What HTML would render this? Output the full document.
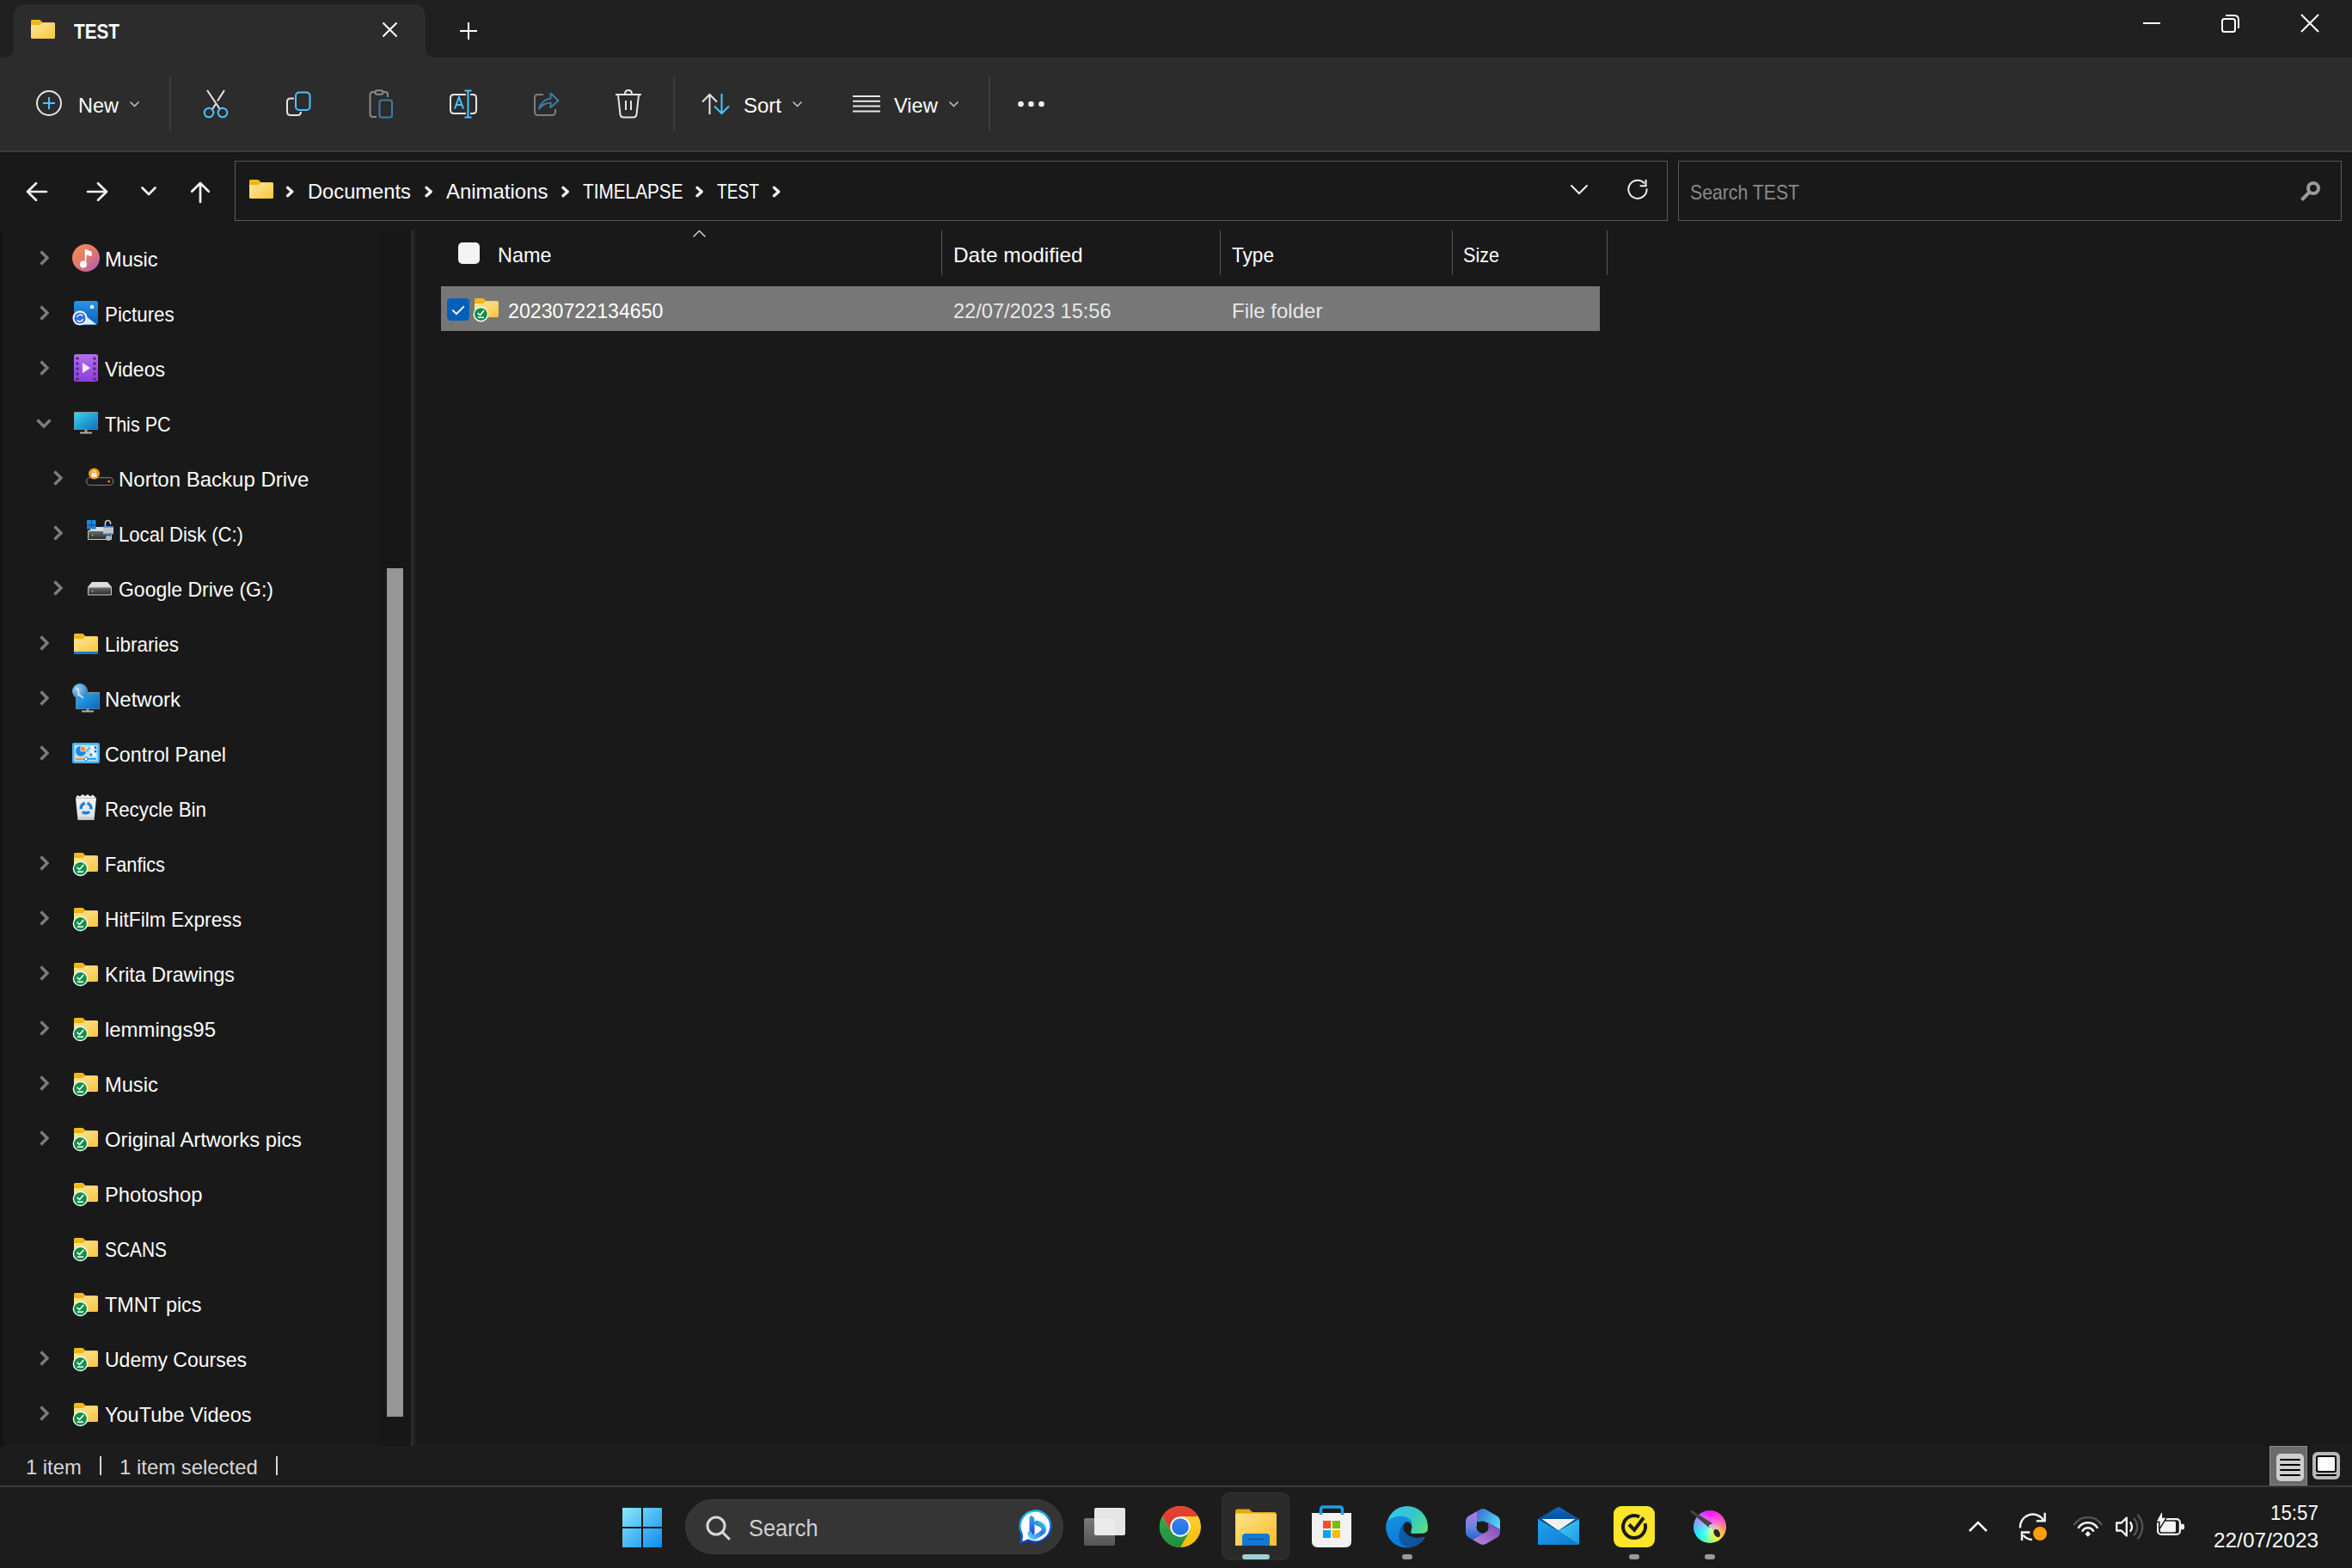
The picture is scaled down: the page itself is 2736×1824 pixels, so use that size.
<!DOCTYPE html>
<html><head><meta charset="utf-8"><style>
html,body{margin:0;padding:0;}
body{width:2736px;height:1824px;position:relative;overflow:hidden;background:#191919;font-family:"Liberation Sans",sans-serif;}
body>div,body>svg{position:absolute;}
.t{white-space:nowrap;transform-origin:0 0;}
</style></head><body>
<div style="left:0px;top:0px;width:2736px;height:66px;background:#202020;"></div>
<div style="left:0px;top:66px;width:2736px;height:109px;background:#2c2c2c;"></div>
<div style="left:503px;top:66px;width:2233px;height:1px;background:#1f1f1f;"></div>
<div style="left:0px;top:66px;width:8px;height:1px;background:#1f1f1f;"></div>
<div style="left:0px;top:175px;width:2736px;height:2px;background:#3a3a3a;"></div>
<div style="left:0px;top:177px;width:2736px;height:1505px;background:#191919;"></div>
<div style="left:0px;top:268px;width:4px;height:1414px;background:#131313;"></div>
<div style="left:442px;top:268px;width:36px;height:1414px;background:#171717;"></div>
<div style="left:478px;top:268px;width:3px;height:1414px;background:#2b2b2b;"></div>
<div style="left:481px;top:268px;width:3px;height:1414px;background:#202020;"></div>
<div style="left:0px;top:1682px;width:2736px;height:46px;background:#1c1c1c;"></div>
<div style="left:0px;top:1728px;width:2736px;height:2px;background:#3b3b3b;"></div>
<div style="left:0px;top:1730px;width:2736px;height:94px;background:#1c1c1c;"></div>
<div style="left:16px;top:5px;width:479px;height:62px;background:#2c2c2c;border-radius:13px 13px 0 0;"></div>
<div style="left:8px;top:58px;width:8px;height:8px;background:radial-gradient(circle at 0 0, #202020 7.5px, #2c2c2c 8px);"></div>
<div style="left:495px;top:58px;width:8px;height:8px;background:radial-gradient(circle at 100% 0, #202020 7.5px, #2c2c2c 8px);"></div>
<svg style="left:36px;top:23px" width="28" height="22" viewBox="0 0 28 22"><defs><linearGradient id="tabfb" x1="0" y1="0" x2="1" y2="1"><stop offset="0" stop-color="#fde7a0"/><stop offset="1" stop-color="#fbc53c"/></linearGradient><linearGradient id="tabft" x1="0" y1="0" x2="0" y2="1"><stop offset="0" stop-color="#f9bd1c"/><stop offset="1" stop-color="#e9a90e"/></linearGradient></defs><path d="M1.5 0 H9.5 Q10.5 0 11.2 0.8 L13.5 3.3 H26.5 Q28 3.3 28 4.8 V9 H0 V1.5 Q0 0 1.5 0Z" fill="url(#tabft)"/><path d="M0 7.3 Q0 6 1.3 6 H10.5 L13.2 3.3 H26.5 Q28 3.3 28 4.8 V20.5 Q28 22 26.5 22 H1.5 Q0 22 0 20.5Z" fill="url(#tabfb)"/></svg>
<div class="t" style="left:86.00px;top:24.68px;font-size:24px;line-height:24px;color:#ffffff;font-weight:700;transform:scaleX(0.8646);">TEST</div>
<svg style="left:0;top:0" width="2736" height="1824" viewBox="0 0 2736 1824"><g stroke="#fff" stroke-width="2" fill="none"><path d="M445.5 26.5 L461.5 42.5 M461.5 26.5 L445.5 42.5"/><path d="M535 36 H555 M545 26 V46"/><path d="M2493 27 H2513"/><rect x="2585" y="22" width="15" height="15" rx="2.5"/><path d="M2589 18 H2599 Q2604 18 2604 23 V33"/><path d="M2677 17 L2697 37 M2697 17 L2677 37"/></g></svg>
<svg style="left:0;top:0" width="2736" height="1824" viewBox="0 0 2736 1824"><g fill="none" stroke-width="2"><circle cx="57" cy="120" r="14" stroke="#e6e6e6"/><path d="M50 120 H64 M57 113 V127" stroke="#4cc2ff"/><path d="M151.5 118.5 L156.5 123.5 L161.5 118.5" stroke="#c8c8c8" stroke-width="1.5"/></g></svg>
<div class="t" style="left:91.00px;top:110.68px;font-size:24px;line-height:24px;color:#ffffff;transform:scaleX(0.9771);">New</div>
<div style="left:197px;top:89px;width:2px;height:63px;background:#3c3c3c;"></div>
<div style="left:783px;top:89px;width:2px;height:63px;background:#3c3c3c;"></div>
<div style="left:1150px;top:89px;width:2px;height:63px;background:#3c3c3c;"></div>
<svg style="left:0;top:0" width="2736" height="1824" viewBox="0 0 2736 1824"><g fill="none" stroke-width="2"><path d="M241 105 L255.5 126.5" stroke="#e6e6e6"/><path d="M261 105 L253 117.5 M251 121 L247 127" stroke="#e6e6e6"/><circle cx="243" cy="131" r="5.3" stroke="#4cc2ff"/><circle cx="259" cy="131" r="5.3" stroke="#4cc2ff"/></g></svg>
<svg style="left:0;top:0" width="2736" height="1824" viewBox="0 0 2736 1824"><g fill="none" stroke-width="2"><path d="M342 114.5 H338 Q334 114.5 334 118.5 V130 Q334 134 338 134 H346 Q350 134 350 130" stroke="#e6e6e6"/><rect x="344" y="107.5" width="16.5" height="20.5" rx="4" stroke="#4cc2ff"/></g></svg>
<svg style="left:0;top:0" width="2736" height="1824" viewBox="0 0 2736 1824"><g fill="none" stroke-width="2"><path d="M438 136 H434 Q430.5 136 430.5 132.5 V110.5 Q430.5 107 434 107 H436 M446 107 H448 Q451 107 451 110 V113" stroke="#8a8a8a"/><rect x="436.5" y="105.3" width="9" height="4.5" rx="2.2" stroke="#8a8a8a"/><rect x="441.5" y="116.5" width="14.5" height="20" rx="2.5" stroke="#3b7fa6"/></g></svg>
<svg style="left:0;top:0" width="2736" height="1824" viewBox="0 0 2736 1824"><g fill="none" stroke-width="2"><path d="M542 110 H528 Q524 110 524 114 V128 Q524 132 528 132 H542 M547 110 H550 Q554 110 554 114 V128 Q554 132 550 132 H547" stroke="#e6e6e6"/><path d="M529 126.5 L534 113 L539 126.5 M531 122 H537" stroke="#4cc2ff"/><path d="M544.5 105.5 V136.5 M540.5 105.5 H548.5 M540.5 136.5 H548.5" stroke="#4cc2ff"/></g></svg>
<svg style="left:0;top:0" width="2736" height="1824" viewBox="0 0 2736 1824"><g fill="none" stroke-width="2"><path d="M632 110 H626 Q622 110 622 114 V130 Q622 134 626 134 H642 Q646 134 646 130 V127" stroke="#7d7d7d"/><path d="M627 126.5 Q630 116 640.5 114.5 V108.5 L649.5 117 L640.5 125 V119.5 Q632 120 627 126.5Z" stroke="#3b7fa6" stroke-linejoin="round"/></g></svg>
<svg style="left:0;top:0" width="2736" height="1824" viewBox="0 0 2736 1824"><g fill="none" stroke-width="2" stroke="#e6e6e6"><path d="M716 110 H746"/><path d="M727 109.5 Q727 105 731 105 Q735 105 735 109.5"/><path d="M719 110.5 L721.5 133 Q722 136.5 725.5 136.5 H736.5 Q740 136.5 740.5 133 L743 110.5"/><path d="M728 117 V128 M734 117 V128"/></g></svg>
<svg style="left:0;top:0" width="2736" height="1824" viewBox="0 0 2736 1824"><g fill="none" stroke-width="2"><path d="M825.5 133 V110 M817 118.5 L825.5 110 L834 118.5" stroke="#e6e6e6"/><path d="M839.5 109 V132 M831 123.5 L839.5 132 L848 123.5" stroke="#4cc2ff"/><path d="M922.5 118.5 L927.5 123.5 L932.5 118.5" stroke="#c8c8c8" stroke-width="1.5"/></g></svg>
<div class="t" style="left:865.00px;top:110.68px;font-size:24px;line-height:24px;color:#ffffff;">Sort</div>
<svg style="left:0;top:0" width="2736" height="1824" viewBox="0 0 2736 1824"><g fill="none" stroke-width="2" stroke="#e6e6e6"><path d="M992 112 H1024 M992 117.8 H1024 M992 123.6 H1024 M992 129.4 H1024"/><path d="M1104.5 118.5 L1109.5 123.5 L1114.5 118.5" stroke="#c8c8c8" stroke-width="1.5"/></g></svg>
<div class="t" style="left:1040.00px;top:110.68px;font-size:24px;line-height:24px;color:#ffffff;transform:scaleX(0.9865);">View</div>
<svg style="left:0;top:0" width="2736" height="1824" viewBox="0 0 2736 1824"><g fill="#f0f0f0"><circle cx="1187.5" cy="121" r="3.3"/><circle cx="1199.5" cy="121" r="3.3"/><circle cx="1211.5" cy="121" r="3.3"/></g></svg>
<svg style="left:0;top:0" width="2736" height="1824" viewBox="0 0 2736 1824"><g fill="none" stroke-width="2.7" stroke="#f2f2f2" stroke-linecap="round" stroke-linejoin="round"><path d="M32 223 H54 M42 213.3 L32 223 L42 232.7"/><path d="M102 223 H124 M114 213.3 L124 223 L114 232.7"/><path d="M165.5 218.5 L173 226 L180.5 218.5"/><path d="M233 235 V213 M223.2 222.8 L233 213 L242.8 222.8"/></g></svg>
<div style="left:273px;top:187px;width:1667px;height:70px;background:transparent;box-sizing:border-box;border:1px solid #5a5a5a;"></div>
<div style="left:1952px;top:187px;width:772px;height:70px;background:transparent;box-sizing:border-box;border:1px solid #5a5a5a;"></div>
<svg style="left:290px;top:209px" width="28" height="22" viewBox="0 0 28 22"><defs><linearGradient id="adfb" x1="0" y1="0" x2="1" y2="1"><stop offset="0" stop-color="#fde7a0"/><stop offset="1" stop-color="#fbc53c"/></linearGradient><linearGradient id="adft" x1="0" y1="0" x2="0" y2="1"><stop offset="0" stop-color="#f9bd1c"/><stop offset="1" stop-color="#e9a90e"/></linearGradient></defs><path d="M1.5 0 H9.5 Q10.5 0 11.2 0.8 L13.5 3.3 H26.5 Q28 3.3 28 4.8 V9 H0 V1.5 Q0 0 1.5 0Z" fill="url(#adft)"/><path d="M0 7.3 Q0 6 1.3 6 H10.5 L13.2 3.3 H26.5 Q28 3.3 28 4.8 V20.5 Q28 22 26.5 22 H1.5 Q0 22 0 20.5Z" fill="url(#adfb)"/></svg>
<svg style="left:0;top:0" width="2736" height="1824" viewBox="0 0 2736 1824"><path d="M334.5 218.3 L339.8 223 L334.5 227.7 M496.0 218.3 L501.3 223 L496.0 227.7 M655.0 218.3 L660.3 223 L655.0 227.7 M811.0 218.3 L816.3 223 L811.0 227.7 M900.5 218.3 L905.8 223 L900.5 227.7 " stroke="#f4f4f4" stroke-width="3.3" fill="none" stroke-linecap="round" stroke-linejoin="round"/></svg>
<div class="t" style="left:358.00px;top:210.68px;font-size:24px;line-height:24px;color:#ffffff;transform:scaleX(0.9876);">Documents</div>
<div class="t" style="left:518.60px;top:210.68px;font-size:24px;line-height:24px;color:#ffffff;transform:scaleX(0.9975);">Animations</div>
<div class="t" style="left:677.50px;top:210.68px;font-size:24px;line-height:24px;color:#ffffff;transform:scaleX(0.8649);">TIMELAPSE</div>
<div class="t" style="left:834.00px;top:210.68px;font-size:24px;line-height:24px;color:#ffffff;transform:scaleX(0.7993);">TEST</div>
<svg style="left:0;top:0" width="2736" height="1824" viewBox="0 0 2736 1824"><g fill="none" stroke="#f0f0f0" stroke-width="2" stroke-linecap="round"><path d="M1828 216 L1837 225 L1846 216"/><path d="M1915.5 219.3 A10.6 10.6 0 1 1 1913 213.4" stroke-linecap="butt"/><path d="M1914.6 209 V216.3 H1907.6" stroke-linejoin="miter" stroke-linecap="butt"/></g></svg>
<div class="t" style="left:1966.00px;top:211.68px;font-size:24px;line-height:24px;color:#8a8a8a;transform:scaleX(0.8844);">Search TEST</div>
<svg style="left:0;top:0" width="2736" height="1824" viewBox="0 0 2736 1824"><g fill="none" stroke="#9a9a9a" stroke-width="4"><circle cx="2691" cy="219" r="6"/><path d="M2686.5 223.5 L2677.5 232.5" stroke-linecap="butt"/></g></svg>
<svg style="left:0;top:0" width="2736" height="1824" viewBox="0 0 2736 1824"><defs><linearGradient id="mus" x1="0" y1="0" x2="1" y2="1"><stop offset="0" stop-color="#f49255"/><stop offset="0.55" stop-color="#e27373"/><stop offset="1" stop-color="#a45bc8"/></linearGradient></defs><circle cx="100" cy="300" r="16" fill="url(#mus)"/><circle cx="97" cy="307.5" r="4" fill="#fff"/><path d="M99.5 307 V290.5 L106 293.5 V297.5 L101 295.5" fill="#fff" stroke="#fff" stroke-width="1.5" stroke-linejoin="round"/></svg>
<div class="t" style="left:122.00px;top:289.68px;font-size:24px;line-height:24px;color:#ffffff;transform:scaleX(0.9841);">Music</div>
<svg style="left:0;top:0" width="2736" height="1824" viewBox="0 0 2736 1824"><defs><linearGradient id="pic" x1="0" y1="0" x2="0" y2="1"><stop offset="0" stop-color="#2a94e6"/><stop offset="1" stop-color="#0a5fb8"/></linearGradient></defs><rect x="86" y="350" width="28" height="28" rx="3" fill="url(#pic)"/><circle cx="107" cy="357" r="2.3" fill="#fff"/><path d="M90 377.5 L96 365 L112.5 377.5Z" fill="#dfeefa"/><circle cx="93" cy="370" r="8.5" fill="#fff"/><circle cx="93" cy="370" r="6.6" fill="#2f6fe0"/><path d="M89.5 369 A3.8 3.8 0 0 1 96.3 367.6 M96.5 371 A3.8 3.8 0 0 1 89.7 372.4" stroke="#fff" stroke-width="1.3" fill="none"/></svg>
<div class="t" style="left:122.00px;top:353.68px;font-size:24px;line-height:24px;color:#ffffff;transform:scaleX(0.9308);">Pictures</div>
<svg style="left:0;top:0" width="2736" height="1824" viewBox="0 0 2736 1824"><defs><linearGradient id="vid" x1="0" y1="0" x2="0" y2="1"><stop offset="0" stop-color="#b56cf0"/><stop offset="1" stop-color="#8b3ed8"/></linearGradient></defs><rect x="86" y="412" width="28" height="32" rx="2.5" fill="url(#vid)"/><rect x="88.5" y="415.5" width="3" height="3" fill="#4a2a78"/><rect x="108.5" y="415.5" width="3" height="3" fill="#4a2a78"/><rect x="88.5" y="421.5" width="3" height="3" fill="#4a2a78"/><rect x="108.5" y="421.5" width="3" height="3" fill="#4a2a78"/><rect x="88.5" y="427.5" width="3" height="3" fill="#4a2a78"/><rect x="108.5" y="427.5" width="3" height="3" fill="#4a2a78"/><rect x="88.5" y="433.5" width="3" height="3" fill="#4a2a78"/><rect x="108.5" y="433.5" width="3" height="3" fill="#4a2a78"/><rect x="88.5" y="439.5" width="3" height="3" fill="#4a2a78"/><rect x="108.5" y="439.5" width="3" height="3" fill="#4a2a78"/><path d="M96 422 L105 428 L96 434Z" fill="#f1ebf8"/></svg>
<div class="t" style="left:122.00px;top:417.68px;font-size:24px;line-height:24px;color:#ffffff;transform:scaleX(0.9589);">Videos</div>
<svg style="left:0;top:0" width="2736" height="1824" viewBox="0 0 2736 1824"><defs><linearGradient id="pcg" x1="0" y1="0" x2="1" y2="1"><stop offset="0" stop-color="#3ad5e8"/><stop offset="1" stop-color="#0b6fc4"/></linearGradient></defs><rect x="86" y="479" width="28" height="21" fill="#8a8a8a"/><rect x="86.5" y="480" width="27" height="19.5" fill="url(#pcg)"/><rect x="98.5" y="500" width="3" height="3" fill="#9a9a9a"/><rect x="93" y="502.5" width="14" height="2" fill="#b0b0b0"/></svg>
<div class="t" style="left:122.00px;top:481.68px;font-size:24px;line-height:24px;color:#ffffff;transform:scaleX(0.8970);">This PC</div>
<svg style="left:0;top:0" width="2736" height="1824" viewBox="0 0 2736 1824"><rect x="100.7" y="555.7" width="31" height="8.6" rx="4.3" stroke="#6e6e6e" stroke-width="1.3" fill="none"/><circle cx="126.7" cy="560" r="1.3" fill="#f2a20c"/><circle cx="109.5" cy="551" r="6.5" fill="#f29b0b"/><rect x="106.5" y="550.5" width="6" height="4.5" fill="#fff"/><path d="M107.8 550.5 V549 A1.7 1.7 0 0 1 111.2 549 V550.5" stroke="#fff" stroke-width="1" fill="none"/></svg>
<div class="t" style="left:138.00px;top:545.68px;font-size:24px;line-height:24px;color:#ffffff;">Norton Backup Drive</div>
<svg style="left:0;top:0" width="2736" height="1824" viewBox="0 0 2736 1824"><defs><linearGradient id="drv" x1="0" y1="0" x2="0" y2="1"><stop offset="0" stop-color="#6a6a6a"/><stop offset="1" stop-color="#2e2e2e"/></linearGradient></defs><path d="M104 617 L107 613 H127 L130 617Z" fill="#dedede"/><rect x="102" y="617" width="28" height="11" rx="1" fill="#cfcfcf"/><rect x="103" y="618" width="26" height="9" fill="url(#drv)"/><circle cx="107.5" cy="622.5" r="1" fill="#3ee24a"/><rect x="101" y="605" width="5" height="5" fill="#1a8ee6"/><rect x="106.5" y="605" width="5" height="5" fill="#1a8ee6"/><rect x="101" y="610.5" width="5" height="5" fill="#1a7fdb"/><rect x="106.5" y="610.5" width="5" height="5" fill="#1a7fdb"/><path d="M122.5 612 V608.5 A3 3 0 0 1 128.5 608.5 V610" stroke="#c8c8c8" stroke-width="1.6" fill="none"/><rect x="120" y="612" width="12" height="10" fill="#c4c4c4"/><rect x="120" y="612" width="12" height="1.6" fill="#2a8be0"/><rect x="120" y="620.4" width="12" height="1.6" fill="#2a8be0"/><circle cx="126" cy="626" r="3" fill="#b4b4b4"/></svg>
<div class="t" style="left:138.00px;top:609.68px;font-size:24px;line-height:24px;color:#ffffff;transform:scaleX(0.9212);">Local Disk (C:)</div>
<svg style="left:0;top:0" width="2736" height="1824" viewBox="0 0 2736 1824"><defs><linearGradient id="drv2" x1="0" y1="0" x2="0" y2="1"><stop offset="0" stop-color="#6a6a6a"/><stop offset="1" stop-color="#2e2e2e"/></linearGradient></defs><path d="M102 683 L107 677 H125 L130 683Z" fill="#dedede"/><rect x="102" y="682.5" width="28" height="10" rx="1" fill="#cfcfcf"/><rect x="103" y="683.5" width="26" height="8" fill="url(#drv2)"/><circle cx="107.5" cy="688" r="1" fill="#3ee24a"/></svg>
<div class="t" style="left:138.00px;top:673.68px;font-size:24px;line-height:24px;color:#ffffff;transform:scaleX(0.9569);">Google Drive (G:)</div>
<svg style="left:86px;top:737px" width="28" height="22" viewBox="0 0 28 22"><defs><linearGradient id="lib7b" x1="0" y1="0" x2="1" y2="1"><stop offset="0" stop-color="#fde7a0"/><stop offset="1" stop-color="#fbc53c"/></linearGradient><linearGradient id="lib7t" x1="0" y1="0" x2="0" y2="1"><stop offset="0" stop-color="#f9bd1c"/><stop offset="1" stop-color="#e9a90e"/></linearGradient></defs><path d="M1.5 0 H9.5 Q10.5 0 11.2 0.8 L13.5 3.3 H26.5 Q28 3.3 28 4.8 V9 H0 V1.5 Q0 0 1.5 0Z" fill="url(#lib7t)"/><path d="M0 7.3 Q0 6 1.3 6 H10.5 L13.2 3.3 H26.5 Q28 3.3 28 4.8 V20.5 Q28 22 26.5 22 H1.5 Q0 22 0 20.5Z" fill="url(#lib7b)"/></svg>
<svg style="left:0;top:0" width="2736" height="1824" viewBox="0 0 2736 1824"><rect x="86" y="758" width="28" height="3" rx="1" fill="#1a78d0"/></svg>
<div class="t" style="left:122.00px;top:737.68px;font-size:24px;line-height:24px;color:#ffffff;transform:scaleX(0.9348);">Libraries</div>
<svg style="left:0;top:0" width="2736" height="1824" viewBox="0 0 2736 1824"><defs><linearGradient id="net" x1="0" y1="0" x2="1" y2="1"><stop offset="0" stop-color="#2bb6ea"/><stop offset="1" stop-color="#0b62c0"/></linearGradient><radialGradient id="glb" cx="0.35" cy="0.35" r="0.7"><stop offset="0" stop-color="#8fd3f5"/><stop offset="1" stop-color="#2f7fc4"/></radialGradient></defs><rect x="88" y="805" width="28" height="20" fill="#8a8a8a"/><rect x="88.5" y="806" width="27" height="18.5" fill="url(#net)"/><rect x="100.5" y="824.5" width="3" height="2.5" fill="#9a9a9a"/><rect x="95" y="826.5" width="14" height="2" fill="#b0b0b0"/><circle cx="93" cy="804" r="9" fill="url(#glb)"/><path d="M88 800 Q93 803 91 808 Q95 810 97 812" stroke="#d8eef9" stroke-width="2" fill="none" opacity="0.8"/></svg>
<div class="t" style="left:122.00px;top:801.68px;font-size:24px;line-height:24px;color:#ffffff;">Network</div>
<svg style="left:0;top:0" width="2736" height="1824" viewBox="0 0 2736 1824"><rect x="84" y="864" width="32" height="24" rx="2" fill="#3fb3f0"/><rect x="86.5" y="866.5" width="27" height="19" fill="#b9e2f8"/><circle cx="94" cy="873.7" r="6" fill="#1e88e5"/><path d="M94 873.7 V867.7 A6 6 0 0 1 100 873.7Z" fill="#f28a0b" stroke="#fff" stroke-width="0.8"/><path d="M100 873.7 Q102 873.7 102.5 871.5 Q103 869.7 105.5 869.7" stroke="#1565c0" stroke-width="0.9" fill="none"/><rect x="105" y="868.2" width="7" height="3" rx="1.5" fill="#fff"/><circle cx="111" cy="869.7" r="1.4" fill="#1565c0"/><rect x="105" y="872.6" width="7" height="3" rx="1.5" fill="#fff"/><circle cx="111" cy="874.1" r="1.4" fill="#1565c0"/><rect x="105" y="876.6" width="7" height="3" rx="1.5" fill="#fff"/><circle cx="106" cy="878.1" r="1.4" fill="#1565c0"/><rect x="88" y="882" width="24" height="1.6" fill="#1e88e5"/><rect x="88" y="882" width="12" height="1.6" fill="#f29b0b"/><circle cx="100" cy="882.8" r="2" fill="#fff" stroke="#1e88e5" stroke-width="1"/></svg>
<div class="t" style="left:122.00px;top:865.68px;font-size:24px;line-height:24px;color:#ffffff;transform:scaleX(0.9697);">Control Panel</div>
<svg style="left:0;top:0" width="2736" height="1824" viewBox="0 0 2736 1824"><defs><linearGradient id="rcb" x1="0" y1="0" x2="0" y2="1"><stop offset="0" stop-color="#f4f6f8"/><stop offset="0.8" stop-color="#dfe3e6"/><stop offset="1" stop-color="#b9bec3"/></linearGradient></defs><path d="M88 928.5 L90 925 L93 926.5 L96 924 L99 926 L102 924 L105 926.5 L108 924.5 L112 928.5Z" fill="#eef0f2"/><path d="M88 928.5 H112 L109.5 954 H90.5Z" fill="url(#rcb)"/><circle cx="100" cy="940" r="5.8" fill="none" stroke="#1a80e0" stroke-width="3.4" stroke-dasharray="8.6 3.5" transform="rotate(-75 100 940)"/></svg>
<div class="t" style="left:122.00px;top:929.68px;font-size:24px;line-height:24px;color:#ffffff;transform:scaleX(0.9313);">Recycle Bin</div>
<svg style="left:86px;top:992px" width="28" height="22" viewBox="0 0 28 22"><defs><linearGradient id="sf11b" x1="0" y1="0" x2="1" y2="1"><stop offset="0" stop-color="#fde7a0"/><stop offset="1" stop-color="#fbc53c"/></linearGradient><linearGradient id="sf11t" x1="0" y1="0" x2="0" y2="1"><stop offset="0" stop-color="#f9bd1c"/><stop offset="1" stop-color="#e9a90e"/></linearGradient></defs><path d="M1.5 0 H9.5 Q10.5 0 11.2 0.8 L13.5 3.3 H26.5 Q28 3.3 28 4.8 V9 H0 V1.5 Q0 0 1.5 0Z" fill="url(#sf11t)"/><path d="M0 7.3 Q0 6 1.3 6 H10.5 L13.2 3.3 H26.5 Q28 3.3 28 4.8 V20.5 Q28 22 26.5 22 H1.5 Q0 22 0 20.5Z" fill="url(#sf11b)"/></svg>
<svg style="left:0;top:0" width="2736" height="1824" viewBox="0 0 2736 1824"><circle cx="93.5" cy="1010.4" r="8.8" fill="#fff"/><circle cx="93.5" cy="1010.4" r="7.4" fill="#108f48"/><path d="M90.2 1009.4 L92.5 1011.5 L96.8 1006.4" stroke="#fff" stroke-width="1.6" fill="none" stroke-linecap="round" stroke-linejoin="round"/><path d="M89.9 1014.1 H97.1" stroke="#fff" stroke-width="1.5"/></svg>
<div class="t" style="left:122.00px;top:993.68px;font-size:24px;line-height:24px;color:#ffffff;transform:scaleX(0.9044);">Fanfics</div>
<svg style="left:86px;top:1056px" width="28" height="22" viewBox="0 0 28 22"><defs><linearGradient id="sf12b" x1="0" y1="0" x2="1" y2="1"><stop offset="0" stop-color="#fde7a0"/><stop offset="1" stop-color="#fbc53c"/></linearGradient><linearGradient id="sf12t" x1="0" y1="0" x2="0" y2="1"><stop offset="0" stop-color="#f9bd1c"/><stop offset="1" stop-color="#e9a90e"/></linearGradient></defs><path d="M1.5 0 H9.5 Q10.5 0 11.2 0.8 L13.5 3.3 H26.5 Q28 3.3 28 4.8 V9 H0 V1.5 Q0 0 1.5 0Z" fill="url(#sf12t)"/><path d="M0 7.3 Q0 6 1.3 6 H10.5 L13.2 3.3 H26.5 Q28 3.3 28 4.8 V20.5 Q28 22 26.5 22 H1.5 Q0 22 0 20.5Z" fill="url(#sf12b)"/></svg>
<svg style="left:0;top:0" width="2736" height="1824" viewBox="0 0 2736 1824"><circle cx="93.5" cy="1074.4" r="8.8" fill="#fff"/><circle cx="93.5" cy="1074.4" r="7.4" fill="#108f48"/><path d="M90.2 1073.4 L92.5 1075.5 L96.8 1070.4" stroke="#fff" stroke-width="1.6" fill="none" stroke-linecap="round" stroke-linejoin="round"/><path d="M89.9 1078.1000000000001 H97.1" stroke="#fff" stroke-width="1.5"/></svg>
<div class="t" style="left:122.00px;top:1057.68px;font-size:24px;line-height:24px;color:#ffffff;transform:scaleX(0.9464);">HitFilm Express</div>
<svg style="left:86px;top:1120px" width="28" height="22" viewBox="0 0 28 22"><defs><linearGradient id="sf13b" x1="0" y1="0" x2="1" y2="1"><stop offset="0" stop-color="#fde7a0"/><stop offset="1" stop-color="#fbc53c"/></linearGradient><linearGradient id="sf13t" x1="0" y1="0" x2="0" y2="1"><stop offset="0" stop-color="#f9bd1c"/><stop offset="1" stop-color="#e9a90e"/></linearGradient></defs><path d="M1.5 0 H9.5 Q10.5 0 11.2 0.8 L13.5 3.3 H26.5 Q28 3.3 28 4.8 V9 H0 V1.5 Q0 0 1.5 0Z" fill="url(#sf13t)"/><path d="M0 7.3 Q0 6 1.3 6 H10.5 L13.2 3.3 H26.5 Q28 3.3 28 4.8 V20.5 Q28 22 26.5 22 H1.5 Q0 22 0 20.5Z" fill="url(#sf13b)"/></svg>
<svg style="left:0;top:0" width="2736" height="1824" viewBox="0 0 2736 1824"><circle cx="93.5" cy="1138.4" r="8.8" fill="#fff"/><circle cx="93.5" cy="1138.4" r="7.4" fill="#108f48"/><path d="M90.2 1137.4 L92.5 1139.5 L96.8 1134.4" stroke="#fff" stroke-width="1.6" fill="none" stroke-linecap="round" stroke-linejoin="round"/><path d="M89.9 1142.1000000000001 H97.1" stroke="#fff" stroke-width="1.5"/></svg>
<div class="t" style="left:122.00px;top:1121.68px;font-size:24px;line-height:24px;color:#ffffff;transform:scaleX(0.9673);">Krita Drawings</div>
<svg style="left:86px;top:1184px" width="28" height="22" viewBox="0 0 28 22"><defs><linearGradient id="sf14b" x1="0" y1="0" x2="1" y2="1"><stop offset="0" stop-color="#fde7a0"/><stop offset="1" stop-color="#fbc53c"/></linearGradient><linearGradient id="sf14t" x1="0" y1="0" x2="0" y2="1"><stop offset="0" stop-color="#f9bd1c"/><stop offset="1" stop-color="#e9a90e"/></linearGradient></defs><path d="M1.5 0 H9.5 Q10.5 0 11.2 0.8 L13.5 3.3 H26.5 Q28 3.3 28 4.8 V9 H0 V1.5 Q0 0 1.5 0Z" fill="url(#sf14t)"/><path d="M0 7.3 Q0 6 1.3 6 H10.5 L13.2 3.3 H26.5 Q28 3.3 28 4.8 V20.5 Q28 22 26.5 22 H1.5 Q0 22 0 20.5Z" fill="url(#sf14b)"/></svg>
<svg style="left:0;top:0" width="2736" height="1824" viewBox="0 0 2736 1824"><circle cx="93.5" cy="1202.4" r="8.8" fill="#fff"/><circle cx="93.5" cy="1202.4" r="7.4" fill="#108f48"/><path d="M90.2 1201.4 L92.5 1203.5 L96.8 1198.4" stroke="#fff" stroke-width="1.6" fill="none" stroke-linecap="round" stroke-linejoin="round"/><path d="M89.9 1206.1000000000001 H97.1" stroke="#fff" stroke-width="1.5"/></svg>
<div class="t" style="left:122.00px;top:1185.68px;font-size:24px;line-height:24px;color:#ffffff;transform:scaleX(0.9969);">lemmings95</div>
<svg style="left:86px;top:1248px" width="28" height="22" viewBox="0 0 28 22"><defs><linearGradient id="sf15b" x1="0" y1="0" x2="1" y2="1"><stop offset="0" stop-color="#fde7a0"/><stop offset="1" stop-color="#fbc53c"/></linearGradient><linearGradient id="sf15t" x1="0" y1="0" x2="0" y2="1"><stop offset="0" stop-color="#f9bd1c"/><stop offset="1" stop-color="#e9a90e"/></linearGradient></defs><path d="M1.5 0 H9.5 Q10.5 0 11.2 0.8 L13.5 3.3 H26.5 Q28 3.3 28 4.8 V9 H0 V1.5 Q0 0 1.5 0Z" fill="url(#sf15t)"/><path d="M0 7.3 Q0 6 1.3 6 H10.5 L13.2 3.3 H26.5 Q28 3.3 28 4.8 V20.5 Q28 22 26.5 22 H1.5 Q0 22 0 20.5Z" fill="url(#sf15b)"/></svg>
<svg style="left:0;top:0" width="2736" height="1824" viewBox="0 0 2736 1824"><circle cx="93.5" cy="1266.4" r="8.8" fill="#fff"/><circle cx="93.5" cy="1266.4" r="7.4" fill="#108f48"/><path d="M90.2 1265.4 L92.5 1267.5 L96.8 1262.4" stroke="#fff" stroke-width="1.6" fill="none" stroke-linecap="round" stroke-linejoin="round"/><path d="M89.9 1270.1000000000001 H97.1" stroke="#fff" stroke-width="1.5"/></svg>
<div class="t" style="left:122.00px;top:1249.68px;font-size:24px;line-height:24px;color:#ffffff;transform:scaleX(0.9856);">Music</div>
<svg style="left:86px;top:1312px" width="28" height="22" viewBox="0 0 28 22"><defs><linearGradient id="sf16b" x1="0" y1="0" x2="1" y2="1"><stop offset="0" stop-color="#fde7a0"/><stop offset="1" stop-color="#fbc53c"/></linearGradient><linearGradient id="sf16t" x1="0" y1="0" x2="0" y2="1"><stop offset="0" stop-color="#f9bd1c"/><stop offset="1" stop-color="#e9a90e"/></linearGradient></defs><path d="M1.5 0 H9.5 Q10.5 0 11.2 0.8 L13.5 3.3 H26.5 Q28 3.3 28 4.8 V9 H0 V1.5 Q0 0 1.5 0Z" fill="url(#sf16t)"/><path d="M0 7.3 Q0 6 1.3 6 H10.5 L13.2 3.3 H26.5 Q28 3.3 28 4.8 V20.5 Q28 22 26.5 22 H1.5 Q0 22 0 20.5Z" fill="url(#sf16b)"/></svg>
<svg style="left:0;top:0" width="2736" height="1824" viewBox="0 0 2736 1824"><circle cx="93.5" cy="1330.4" r="8.8" fill="#fff"/><circle cx="93.5" cy="1330.4" r="7.4" fill="#108f48"/><path d="M90.2 1329.4 L92.5 1331.5 L96.8 1326.4" stroke="#fff" stroke-width="1.6" fill="none" stroke-linecap="round" stroke-linejoin="round"/><path d="M89.9 1334.1000000000001 H97.1" stroke="#fff" stroke-width="1.5"/></svg>
<div class="t" style="left:122.00px;top:1313.68px;font-size:24px;line-height:24px;color:#ffffff;transform:scaleX(0.9926);">Original Artworks pics</div>
<svg style="left:86px;top:1376px" width="28" height="22" viewBox="0 0 28 22"><defs><linearGradient id="sf17b" x1="0" y1="0" x2="1" y2="1"><stop offset="0" stop-color="#fde7a0"/><stop offset="1" stop-color="#fbc53c"/></linearGradient><linearGradient id="sf17t" x1="0" y1="0" x2="0" y2="1"><stop offset="0" stop-color="#f9bd1c"/><stop offset="1" stop-color="#e9a90e"/></linearGradient></defs><path d="M1.5 0 H9.5 Q10.5 0 11.2 0.8 L13.5 3.3 H26.5 Q28 3.3 28 4.8 V9 H0 V1.5 Q0 0 1.5 0Z" fill="url(#sf17t)"/><path d="M0 7.3 Q0 6 1.3 6 H10.5 L13.2 3.3 H26.5 Q28 3.3 28 4.8 V20.5 Q28 22 26.5 22 H1.5 Q0 22 0 20.5Z" fill="url(#sf17b)"/></svg>
<svg style="left:0;top:0" width="2736" height="1824" viewBox="0 0 2736 1824"><circle cx="93.5" cy="1394.4" r="8.8" fill="#fff"/><circle cx="93.5" cy="1394.4" r="7.4" fill="#108f48"/><path d="M90.2 1393.4 L92.5 1395.5 L96.8 1390.4" stroke="#fff" stroke-width="1.6" fill="none" stroke-linecap="round" stroke-linejoin="round"/><path d="M89.9 1398.1000000000001 H97.1" stroke="#fff" stroke-width="1.5"/></svg>
<div class="t" style="left:122.00px;top:1377.68px;font-size:24px;line-height:24px;color:#ffffff;transform:scaleX(0.9887);">Photoshop</div>
<svg style="left:86px;top:1440px" width="28" height="22" viewBox="0 0 28 22"><defs><linearGradient id="sf18b" x1="0" y1="0" x2="1" y2="1"><stop offset="0" stop-color="#fde7a0"/><stop offset="1" stop-color="#fbc53c"/></linearGradient><linearGradient id="sf18t" x1="0" y1="0" x2="0" y2="1"><stop offset="0" stop-color="#f9bd1c"/><stop offset="1" stop-color="#e9a90e"/></linearGradient></defs><path d="M1.5 0 H9.5 Q10.5 0 11.2 0.8 L13.5 3.3 H26.5 Q28 3.3 28 4.8 V9 H0 V1.5 Q0 0 1.5 0Z" fill="url(#sf18t)"/><path d="M0 7.3 Q0 6 1.3 6 H10.5 L13.2 3.3 H26.5 Q28 3.3 28 4.8 V20.5 Q28 22 26.5 22 H1.5 Q0 22 0 20.5Z" fill="url(#sf18b)"/></svg>
<svg style="left:0;top:0" width="2736" height="1824" viewBox="0 0 2736 1824"><circle cx="93.5" cy="1458.4" r="8.8" fill="#fff"/><circle cx="93.5" cy="1458.4" r="7.4" fill="#108f48"/><path d="M90.2 1457.4 L92.5 1459.5 L96.8 1454.4" stroke="#fff" stroke-width="1.6" fill="none" stroke-linecap="round" stroke-linejoin="round"/><path d="M89.9 1462.1000000000001 H97.1" stroke="#fff" stroke-width="1.5"/></svg>
<div class="t" style="left:122.00px;top:1441.68px;font-size:24px;line-height:24px;color:#ffffff;transform:scaleX(0.8706);">SCANS</div>
<svg style="left:86px;top:1504px" width="28" height="22" viewBox="0 0 28 22"><defs><linearGradient id="sf19b" x1="0" y1="0" x2="1" y2="1"><stop offset="0" stop-color="#fde7a0"/><stop offset="1" stop-color="#fbc53c"/></linearGradient><linearGradient id="sf19t" x1="0" y1="0" x2="0" y2="1"><stop offset="0" stop-color="#f9bd1c"/><stop offset="1" stop-color="#e9a90e"/></linearGradient></defs><path d="M1.5 0 H9.5 Q10.5 0 11.2 0.8 L13.5 3.3 H26.5 Q28 3.3 28 4.8 V9 H0 V1.5 Q0 0 1.5 0Z" fill="url(#sf19t)"/><path d="M0 7.3 Q0 6 1.3 6 H10.5 L13.2 3.3 H26.5 Q28 3.3 28 4.8 V20.5 Q28 22 26.5 22 H1.5 Q0 22 0 20.5Z" fill="url(#sf19b)"/></svg>
<svg style="left:0;top:0" width="2736" height="1824" viewBox="0 0 2736 1824"><circle cx="93.5" cy="1522.4" r="8.8" fill="#fff"/><circle cx="93.5" cy="1522.4" r="7.4" fill="#108f48"/><path d="M90.2 1521.4 L92.5 1523.5 L96.8 1518.4" stroke="#fff" stroke-width="1.6" fill="none" stroke-linecap="round" stroke-linejoin="round"/><path d="M89.9 1526.1000000000001 H97.1" stroke="#fff" stroke-width="1.5"/></svg>
<div class="t" style="left:122.00px;top:1505.68px;font-size:24px;line-height:24px;color:#ffffff;transform:scaleX(0.9732);">TMNT pics</div>
<svg style="left:86px;top:1568px" width="28" height="22" viewBox="0 0 28 22"><defs><linearGradient id="sf20b" x1="0" y1="0" x2="1" y2="1"><stop offset="0" stop-color="#fde7a0"/><stop offset="1" stop-color="#fbc53c"/></linearGradient><linearGradient id="sf20t" x1="0" y1="0" x2="0" y2="1"><stop offset="0" stop-color="#f9bd1c"/><stop offset="1" stop-color="#e9a90e"/></linearGradient></defs><path d="M1.5 0 H9.5 Q10.5 0 11.2 0.8 L13.5 3.3 H26.5 Q28 3.3 28 4.8 V9 H0 V1.5 Q0 0 1.5 0Z" fill="url(#sf20t)"/><path d="M0 7.3 Q0 6 1.3 6 H10.5 L13.2 3.3 H26.5 Q28 3.3 28 4.8 V20.5 Q28 22 26.5 22 H1.5 Q0 22 0 20.5Z" fill="url(#sf20b)"/></svg>
<svg style="left:0;top:0" width="2736" height="1824" viewBox="0 0 2736 1824"><circle cx="93.5" cy="1586.4" r="8.8" fill="#fff"/><circle cx="93.5" cy="1586.4" r="7.4" fill="#108f48"/><path d="M90.2 1585.4 L92.5 1587.5 L96.8 1582.4" stroke="#fff" stroke-width="1.6" fill="none" stroke-linecap="round" stroke-linejoin="round"/><path d="M89.9 1590.1000000000001 H97.1" stroke="#fff" stroke-width="1.5"/></svg>
<div class="t" style="left:122.00px;top:1569.68px;font-size:24px;line-height:24px;color:#ffffff;transform:scaleX(0.9587);">Udemy Courses</div>
<svg style="left:86px;top:1632px" width="28" height="22" viewBox="0 0 28 22"><defs><linearGradient id="sf21b" x1="0" y1="0" x2="1" y2="1"><stop offset="0" stop-color="#fde7a0"/><stop offset="1" stop-color="#fbc53c"/></linearGradient><linearGradient id="sf21t" x1="0" y1="0" x2="0" y2="1"><stop offset="0" stop-color="#f9bd1c"/><stop offset="1" stop-color="#e9a90e"/></linearGradient></defs><path d="M1.5 0 H9.5 Q10.5 0 11.2 0.8 L13.5 3.3 H26.5 Q28 3.3 28 4.8 V9 H0 V1.5 Q0 0 1.5 0Z" fill="url(#sf21t)"/><path d="M0 7.3 Q0 6 1.3 6 H10.5 L13.2 3.3 H26.5 Q28 3.3 28 4.8 V20.5 Q28 22 26.5 22 H1.5 Q0 22 0 20.5Z" fill="url(#sf21b)"/></svg>
<svg style="left:0;top:0" width="2736" height="1824" viewBox="0 0 2736 1824"><circle cx="93.5" cy="1650.4" r="8.8" fill="#fff"/><circle cx="93.5" cy="1650.4" r="7.4" fill="#108f48"/><path d="M90.2 1649.4 L92.5 1651.5 L96.8 1646.4" stroke="#fff" stroke-width="1.6" fill="none" stroke-linecap="round" stroke-linejoin="round"/><path d="M89.9 1654.1000000000001 H97.1" stroke="#fff" stroke-width="1.5"/></svg>
<div class="t" style="left:122.00px;top:1633.68px;font-size:24px;line-height:24px;color:#ffffff;transform:scaleX(0.9804);">YouTube Videos</div>
<svg style="left:0;top:0" width="2736" height="1824" viewBox="0 0 2736 1824"><path d="M47.5 292.5 L55 300 L47.5 307.5" stroke="#7c7c7c" stroke-width="3.4" fill="none"/><path d="M47.5 356.5 L55 364 L47.5 371.5" stroke="#7c7c7c" stroke-width="3.4" fill="none"/><path d="M47.5 420.5 L55 428 L47.5 435.5" stroke="#7c7c7c" stroke-width="3.4" fill="none"/><path d="M43.5 488.5 L51 496 L58.5 488.5" stroke="#7c7c7c" stroke-width="3.4" fill="none"/><path d="M63.5 548.5 L71 556 L63.5 563.5" stroke="#7c7c7c" stroke-width="3.4" fill="none"/><path d="M63.5 612.5 L71 620 L63.5 627.5" stroke="#7c7c7c" stroke-width="3.4" fill="none"/><path d="M63.5 676.5 L71 684 L63.5 691.5" stroke="#7c7c7c" stroke-width="3.4" fill="none"/><path d="M47.5 740.5 L55 748 L47.5 755.5" stroke="#7c7c7c" stroke-width="3.4" fill="none"/><path d="M47.5 804.5 L55 812 L47.5 819.5" stroke="#7c7c7c" stroke-width="3.4" fill="none"/><path d="M47.5 868.5 L55 876 L47.5 883.5" stroke="#7c7c7c" stroke-width="3.4" fill="none"/><path d="M47.5 996.5 L55 1004 L47.5 1011.5" stroke="#7c7c7c" stroke-width="3.4" fill="none"/><path d="M47.5 1060.5 L55 1068 L47.5 1075.5" stroke="#7c7c7c" stroke-width="3.4" fill="none"/><path d="M47.5 1124.5 L55 1132 L47.5 1139.5" stroke="#7c7c7c" stroke-width="3.4" fill="none"/><path d="M47.5 1188.5 L55 1196 L47.5 1203.5" stroke="#7c7c7c" stroke-width="3.4" fill="none"/><path d="M47.5 1252.5 L55 1260 L47.5 1267.5" stroke="#7c7c7c" stroke-width="3.4" fill="none"/><path d="M47.5 1316.5 L55 1324 L47.5 1331.5" stroke="#7c7c7c" stroke-width="3.4" fill="none"/><path d="M47.5 1572.5 L55 1580 L47.5 1587.5" stroke="#7c7c7c" stroke-width="3.4" fill="none"/><path d="M47.5 1636.5 L55 1644 L47.5 1651.5" stroke="#7c7c7c" stroke-width="3.4" fill="none"/></svg>
<div style="left:450px;top:661px;width:19px;height:987px;background:#969696;"></div>
<div style="left:532.5px;top:281.5px;width:25px;height:25px;background:#f3f3f3;border-radius:5px;"></div>
<div class="t" style="left:578.60px;top:284.68px;font-size:24px;line-height:24px;color:#ffffff;transform:scaleX(0.9766);">Name</div>
<div class="t" style="left:1109.00px;top:284.68px;font-size:24px;line-height:24px;color:#ffffff;transform:scaleX(1.0169);">Date modified</div>
<div class="t" style="left:1433.00px;top:284.68px;font-size:24px;line-height:24px;color:#ffffff;transform:scaleX(0.9423);">Type</div>
<div class="t" style="left:1702.00px;top:284.68px;font-size:24px;line-height:24px;color:#ffffff;transform:scaleX(0.8994);">Size</div>
<svg style="left:0;top:0" width="2736" height="1824" viewBox="0 0 2736 1824"><path d="M806.5 275.5 L813.5 268.5 L820.5 275.5" stroke="#cfcfcf" stroke-width="1.5" fill="none"/></svg>
<div style="left:1095px;top:268px;width:1px;height:52px;background:#555555;"></div>
<div style="left:1419px;top:268px;width:1px;height:52px;background:#555555;"></div>
<div style="left:1689px;top:268px;width:1px;height:52px;background:#555555;"></div>
<div style="left:1869px;top:268px;width:1px;height:52px;background:#555555;"></div>
<div style="left:513px;top:333px;width:1348px;height:52px;background:#777777;"></div>
<div style="left:520px;top:347px;width:26px;height:26px;background:#005fbd;border-radius:4.5px;"></div>
<svg style="left:0;top:0" width="2736" height="1824" viewBox="0 0 2736 1824"><path d="M526.3 360.5 L531 365.2 L539.8 356.3" stroke="#fff" stroke-width="1.8" fill="none"/></svg>
<svg style="left:552px;top:347px" width="28" height="22" viewBox="0 0 28 22"><defs><linearGradient id="rowfb" x1="0" y1="0" x2="1" y2="1"><stop offset="0" stop-color="#fde7a0"/><stop offset="1" stop-color="#fbc53c"/></linearGradient><linearGradient id="rowft" x1="0" y1="0" x2="0" y2="1"><stop offset="0" stop-color="#f9bd1c"/><stop offset="1" stop-color="#e9a90e"/></linearGradient></defs><path d="M1.5 0 H9.5 Q10.5 0 11.2 0.8 L13.5 3.3 H26.5 Q28 3.3 28 4.8 V9 H0 V1.5 Q0 0 1.5 0Z" fill="url(#rowft)"/><path d="M0 7.3 Q0 6 1.3 6 H10.5 L13.2 3.3 H26.5 Q28 3.3 28 4.8 V20.5 Q28 22 26.5 22 H1.5 Q0 22 0 20.5Z" fill="url(#rowfb)"/></svg>
<svg style="left:0;top:0" width="2736" height="1824" viewBox="0 0 2736 1824"><circle cx="559.4" cy="365.6" r="8.8" fill="#fff"/><circle cx="559.4" cy="365.6" r="7.4" fill="#108f48"/><path d="M556.1 364.6 L558.4 366.70000000000005 L562.6999999999999 361.6" stroke="#fff" stroke-width="1.6" fill="none" stroke-linecap="round" stroke-linejoin="round"/><path d="M555.8 369.3 H563.0" stroke="#fff" stroke-width="1.5"/></svg>
<div class="t" style="left:590.50px;top:349.68px;font-size:24px;line-height:24px;color:#ffffff;transform:scaleX(0.9658);">20230722134650</div>
<div class="t" style="left:1109.00px;top:349.68px;font-size:24px;line-height:24px;color:#e8e8e8;transform:scaleX(0.9823);">22/07/2023 15:56</div>
<div class="t" style="left:1433.00px;top:349.68px;font-size:24px;line-height:24px;color:#e8e8e8;">File folder</div>
<div class="t" style="left:29.80px;top:1694.68px;font-size:24px;line-height:24px;color:#d6d6d6;transform:scaleX(0.9908);">1 item</div>
<div style="left:116px;top:1694px;width:2px;height:22px;background:#d6d6d6;"></div>
<div class="t" style="left:139.00px;top:1694.68px;font-size:24px;line-height:24px;color:#d6d6d6;transform:scaleX(0.9957);">1 item selected</div>
<div style="left:321px;top:1694px;width:2px;height:22px;background:#d6d6d6;"></div>
<div style="left:2640px;top:1682px;width:44px;height:46px;background:#6b6b6b;box-sizing:border-box;border:1px solid #8c8c8c;"></div>
<div style="left:2648px;top:1691px;width:32px;height:32px;background:#cfcfcf;border-radius:5px;"></div>
<svg style="left:0;top:0" width="2736" height="1824" viewBox="0 0 2736 1824"><g stroke="#000" stroke-width="2" stroke-linecap="round"><path d="M2653 1698 H2675 M2653 1704 H2675 M2653 1710 H2675 M2653 1716 H2675"/></g></svg>
<div style="left:2690px;top:1689px;width:32px;height:32px;background:#b8b8b8;border-radius:6px;"></div>
<div style="left:2694px;top:1693px;width:24px;height:20px;background:#ffffff;box-sizing:border-box;border:2px solid #000;border-radius:3px;"></div>
<svg style="left:0;top:0" width="2736" height="1824" viewBox="0 0 2736 1824"><path d="M2695 1716 H2717" stroke="#000" stroke-width="2" stroke-linecap="round"/></svg>
<svg style="left:0;top:0" width="2736" height="1824" viewBox="0 0 2736 1824"><defs><linearGradient id="win" x1="0" y1="0" x2="1" y2="1"><stop offset="0" stop-color="#8ce8fd"/><stop offset="1" stop-color="#0b8cf0"/></linearGradient></defs><g fill="url(#win)"><path d="M724 1754 H746 V1776 H724Z M748 1754 H770 V1776 H748Z M724 1778 H746 V1800 H724Z M748 1778 H770 V1800 H748Z"/></g></svg>
<div style="left:797px;top:1744px;width:440px;height:64px;background:#353535;box-sizing:border-box;border:1px solid #3e3e3e;border-radius:32px;"></div>
<svg style="left:0;top:0" width="2736" height="1824" viewBox="0 0 2736 1824"><g fill="none" stroke="#d8d8d8" stroke-width="3"><circle cx="833" cy="1775" r="10"/><path d="M840.5 1782.5 L848 1790" stroke-linecap="round"/></g></svg>
<div class="t" style="left:871.40px;top:1764.30px;font-size:28px;line-height:28px;color:#d0d0d0;transform:scaleX(0.9087);">Search</div>
<svg style="left:0;top:0" width="2736" height="1824" viewBox="0 0 2736 1824"><defs><linearGradient id="bgr" x1="0" y1="0" x2="0.3" y2="1"><stop offset="0" stop-color="#19d3f2"/><stop offset="1" stop-color="#0a3fc8"/></linearGradient><linearGradient id="bst" x1="0" y1="0" x2="0" y2="1"><stop offset="0" stop-color="#38a8f2"/><stop offset="1" stop-color="#2040e0"/></linearGradient><linearGradient id="bbw" x1="0" y1="1" x2="1" y2="0"><stop offset="0" stop-color="#4fd0f5"/><stop offset="0.6" stop-color="#2f6fe8"/><stop offset="1" stop-color="#30d8d8"/></linearGradient></defs><path d="M1188.5 1784 A18 18 0 1 1 1196 1791.5 Q1192 1793.5 1187 1794.5 Q1189.5 1789 1188.5 1784Z" fill="#fff" stroke="url(#bgr)" stroke-width="2.4" stroke-linejoin="round"/><path d="M1197.5 1765.5 Q1197.5 1763 1200 1763.3 L1201.5 1764 Q1203.5 1765 1203.5 1768 V1783 Q1203.5 1786 1200.5 1786 Q1197.5 1786 1197.5 1783Z" fill="url(#bst)"/><path d="M1206 1771.5 Q1216 1774.5 1214 1781 Q1212 1784 1204 1788 Q1199 1789 1198 1784" stroke="url(#bbw)" stroke-width="5.5" fill="none" stroke-linecap="round" stroke-linejoin="round"/></svg>
<svg style="left:0;top:0" width="2736" height="1824" viewBox="0 0 2736 1824"><defs><linearGradient id="tv1" x1="0" y1="0" x2="0" y2="1"><stop offset="0" stop-color="#7a7a7a"/><stop offset="1" stop-color="#555"/></linearGradient></defs><rect x="1261" y="1766" width="36" height="32" rx="2" fill="url(#tv1)"/><rect x="1273" y="1754" width="36" height="32" rx="2" fill="#f4f4f4" opacity="0.93"/></svg>
<svg style="left:0;top:0" width="2736" height="1824" viewBox="0 0 2736 1824"><defs><linearGradient id="chr" x1="0" y1="0" x2="0" y2="1"><stop offset="0" stop-color="#ea4335"/><stop offset="1" stop-color="#d93025"/></linearGradient><linearGradient id="chy" x1="0" y1="0" x2="0" y2="1"><stop offset="0" stop-color="#fdd23e"/><stop offset="1" stop-color="#fbbc04"/></linearGradient><linearGradient id="chg" x1="0" y1="0" x2="0" y2="1"><stop offset="0" stop-color="#34a853"/><stop offset="1" stop-color="#1e8e3e"/></linearGradient><linearGradient id="chb" x1="0" y1="0" x2="0" y2="1"><stop offset="0" stop-color="#3b82ea"/><stop offset="1" stop-color="#1a73e8"/></linearGradient></defs><circle cx="1373" cy="1776" r="24" fill="url(#chy)"/><path d="M1352.2 1764 A24 24 0 0 1 1393.8 1764 H1373 L1364.2 1784.8Z" fill="url(#chr)"/><path d="M1352.2 1764 L1364.2 1784.8 L1385 1779.2 L1373 1800 A24 24 0 0 1 1352.2 1764Z" fill="url(#chg)"/><circle cx="1373" cy="1776" r="11.8" fill="#fff"/><circle cx="1373" cy="1776" r="9.8" fill="url(#chb)"/></svg>
<div style="left:1421px;top:1736px;width:79px;height:79px;background:#2a2a2a;box-sizing:border-box;border:1px solid #333;border-radius:9px;"></div>
<svg style="left:0;top:0" width="2736" height="1824" viewBox="0 0 2736 1824"><defs><linearGradient id="exb" x1="0" y1="0" x2="1" y2="1"><stop offset="0" stop-color="#ffe18a"/><stop offset="1" stop-color="#f9be2b"/></linearGradient></defs><path d="M1437 1758 Q1437 1755.5 1439.5 1755.5 H1453 L1457 1759 H1482 Q1485 1759 1485 1762 V1798 H1437Z" fill="#e4a70f"/><path d="M1437 1763 Q1437 1760.5 1439.5 1760.5 H1482.5 Q1485 1760.5 1485 1763 V1798 H1437Z" fill="url(#exb)"/><path d="M1445 1798 V1788 Q1445 1784 1449 1784 H1473 Q1477 1784 1477 1788 V1798Z" fill="#1478d4"/><path d="M1452 1790.5 H1470" stroke="#0a4f9a" stroke-width="1.2"/></svg>
<div style="left:1445px;top:1808px;width:32px;height:6px;background:#9ecfd4;border-radius:3px;"></div>
<svg style="left:0;top:0" width="2736" height="1824" viewBox="0 0 2736 1824"><path d="M1526 1760 H1572 V1793 Q1572 1800 1565 1800 H1533 Q1526 1800 1526 1793Z" fill="#f2f2f2"/><path d="M1536.5 1762 V1756 Q1536.5 1753 1539.5 1753 H1558.5 Q1561.5 1753 1561.5 1756 V1762" stroke="#1aa0f0" stroke-width="3.5" fill="none"/><rect x="1539" y="1769" width="9" height="9" fill="#f25022"/><rect x="1550" y="1769" width="9" height="9" fill="#7fba00"/><rect x="1539" y="1780" width="9" height="9" fill="#00a4ef"/><rect x="1550" y="1780" width="9" height="9" fill="#ffb900"/></svg>
<svg style="left:0;top:0" width="2736" height="1824" viewBox="0 0 2736 1824"><defs><linearGradient id="edg" x1="0" y1="0" x2="1" y2="0.8"><stop offset="0" stop-color="#38c6f4"/><stop offset="0.5" stop-color="#33c7c8"/><stop offset="1" stop-color="#62e86a"/></linearGradient><linearGradient id="edb" x1="0" y1="0" x2="0.3" y2="1"><stop offset="0" stop-color="#1593e2"/><stop offset="1" stop-color="#0a7ad8"/></linearGradient><linearGradient id="edd" x1="0" y1="0" x2="1" y2="1"><stop offset="0" stop-color="#0d5fae"/><stop offset="1" stop-color="#0f4f96"/></linearGradient></defs><circle cx="1637" cy="1776" r="24" fill="url(#edg)"/><path d="M1613.2 1769.5 Q1625 1761 1636 1765 Q1641 1767 1642 1770.5 L1642 1800.3 L1633 1800.3 A24 24 0 0 1 1613.2 1769.5Z" fill="url(#edb)"/><path d="M1632.5 1772 Q1625.5 1781 1628 1792.7 Q1632 1799 1640 1800 A24 24 0 0 0 1657.5 1788.3 Q1650 1789.5 1645.5 1788.7 Q1636 1786 1632.5 1779 Q1631.5 1775 1632.5 1772Z" fill="url(#edd)"/><path d="M1636 1770.3 Q1642.3 1770.8 1642.4 1776 Q1642 1779.5 1640.8 1781.5 Q1640.5 1784 1644 1784 L1656 1783.8 Q1660 1782.5 1662 1780 L1663 1789 L1657.5 1788.2 Q1650 1789.5 1645.5 1788.7 Q1637 1787 1633 1780.5 Q1630.5 1773 1636 1770.3Z" fill="#1c1c1c"/></svg>
<div style="left:1631px;top:1808px;width:12px;height:6px;background:#9a9a9a;border-radius:3px;"></div>
<svg style="left:0;top:0" width="2736" height="1824" viewBox="0 0 2736 1824"><defs><clipPath id="hexc"><path d="M1721.10 1756.24 Q1725 1754 1728.90 1756.24 L1741.10 1763.26 Q1745 1765.5 1745.00 1770.00 L1745.00 1782.00 Q1745 1786.5 1741.10 1788.74 L1728.90 1795.76 Q1725 1798 1721.10 1795.76 L1708.90 1788.74 Q1705 1786.5 1705.00 1782.00 L1705.00 1770.00 Q1705 1765.5 1708.90 1763.26 Z"/></clipPath><linearGradient id="m3l" x1="0" y1="0" x2="0" y2="1"><stop offset="0" stop-color="#c07ee8"/><stop offset="0.6" stop-color="#6f82e2"/><stop offset="1" stop-color="#1266cc"/></linearGradient><linearGradient id="m3t" x1="0" y1="0" x2="1" y2="0.5"><stop offset="0" stop-color="#3a62cc"/><stop offset="1" stop-color="#50e0fa"/></linearGradient><linearGradient id="m3b" x1="0" y1="1" x2="1" y2="0"><stop offset="0" stop-color="#d890f2"/><stop offset="1" stop-color="#6a48a8"/></linearGradient></defs><g clip-path="url(#hexc)"><path d="M1700 1762 L1718 1752 V1778 L1725 1784 L1711 1792 L1700 1786Z" fill="url(#m3l)"/><path d="M1718 1752 L1725 1750 L1750 1762 V1782 L1731.5 1771.5 L1718 1770Z" fill="url(#m3t)"/><path d="M1731.5 1771.5 L1750 1782 V1790 L1725 1802 L1700 1790 L1711 1792 L1725 1784Z" fill="url(#m3b)"/></g><circle cx="1724.6" cy="1776.6" r="7" fill="#1c1c1c"/></svg>
<svg style="left:0;top:0" width="2736" height="1824" viewBox="0 0 2736 1824"><defs><linearGradient id="mlf" x1="0" y1="0" x2="1" y2="1"><stop offset="0" stop-color="#22a4ea"/><stop offset="1" stop-color="#0c78d4"/></linearGradient><linearGradient id="mlr" x1="0" y1="0" x2="1" y2="1"><stop offset="0" stop-color="#46d0f6"/><stop offset="1" stop-color="#1a9ae0"/></linearGradient><linearGradient id="mlt" x1="0" y1="0" x2="0" y2="1"><stop offset="0" stop-color="#0a6cc8"/><stop offset="1" stop-color="#064f9a"/></linearGradient></defs><path d="M1789 1767 L1811.5 1753.5 Q1813 1752.8 1814.5 1753.5 L1837 1767Z" fill="url(#mlt)"/><path d="M1789 1767 H1837 L1813 1781Z" fill="#08498e"/><path d="M1793.5 1767 H1832.5 L1813 1780.5Z" fill="#efefef"/><path d="M1789 1767 L1813 1781 L1837 1797 H1789Z" fill="url(#mlf)"/><path d="M1837 1767 V1797 L1813 1781Z" fill="url(#mlr)"/></svg>
<div style="left:1877px;top:1752px;width:48px;height:48px;background:#ffe629;border-radius:9px;"></div>
<svg style="left:0;top:0" width="2736" height="1824" viewBox="0 0 2736 1824"><path d="M1913.4 1772.0 A13 13 0 1 1 1907.1 1764.5" stroke="#1a1a1a" stroke-width="4" fill="none"/><path d="M1895 1773.5 L1901.2 1779.7 L1912 1765.5" stroke="#1a1a1a" stroke-width="4" fill="none"/></svg>
<div style="left:1895px;top:1808px;width:12px;height:6px;background:#9a9a9a;border-radius:3px;"></div>
<div style="left:1970px;top:1756.5px;width:38px;height:38px;border-radius:50%;background:radial-gradient(circle at 50% 50%, rgba(255,255,255,0.45) 0, rgba(255,255,255,0) 62%), conic-gradient(from 0deg, #ff10f8 0deg, #ff50c0 60deg, #ff9a70 100deg, #ffd840 135deg, #e8ff30 150deg, #80ffa0 185deg, #10fff0 225deg, #40c8ff 265deg, #a090ff 300deg, #d840ff 335deg, #ff10f8 360deg);"></div>
<svg style="left:0;top:0" width="2736" height="1824" viewBox="0 0 2736 1824"><path d="M1965.9 1758.6 L1967.3 1756.6 L1991.9 1771.9 L1988.1 1777.1Z" fill="#444"/><path d="M1990 1775.3 L1995 1779" stroke="#c8c8c8" stroke-width="4.2" stroke-linecap="round"/><ellipse cx="1997.2" cy="1783.6" rx="3.3" ry="5" fill="#262626" transform="rotate(-30 1997.2 1783.6)"/></svg>
<div style="left:1983px;top:1808px;width:12px;height:6px;background:#9a9a9a;border-radius:3px;"></div>
<svg style="left:0;top:0" width="2736" height="1824" viewBox="0 0 2736 1824"><g fill="none" stroke="#f6f6f6" stroke-width="2.6"><path d="M2291 1781 L2301 1771 L2311 1781"/></g><g fill="none" stroke="#f6f6f6" stroke-width="2.4"><path d="M2350 1777.3 A14.7 14.7 0 0 1 2377 1768.3"/><path d="M2368.8 1769.3 H2378.7 V1759.8"/><path d="M2353.4 1785.7 A14.7 14.7 0 0 0 2363.9 1791"/><path d="M2352 1792 V1782.5 H2361.3"/></g><circle cx="2373.1" cy="1784" r="9.6" fill="#1c1c1c"/><circle cx="2373.1" cy="1784" r="8" fill="#ffa00a"/><g fill="none" stroke-width="2.4" stroke-linecap="round"><path d="M2413.19 1773.06 A19.3 19.3 0 0 1 2444.41 1773.06" stroke="#555"/><path d="M2417.86 1777.02 A13.2 13.2 0 0 1 2439.74 1777.02" stroke="#f6f6f6"/><path d="M2422.56 1780.80 A7.2 7.2 0 0 1 2435.04 1780.80" stroke="#f6f6f6"/></g><path d="M2428.8 1781.1000000000001 L2432.1000000000004 1784.4 L2428.8 1787.7 L2425.5 1784.4Z" fill="#f6f6f6"/><g fill="none" stroke-width="2.3"><path d="M2462.2 1771.5 H2467.8 L2473.8 1765.5 V1786.5 L2467.8 1780.5 H2462.2Z" stroke="#f6f6f6" stroke-linejoin="round"/><path d="M2477.66 1770.34 A8 8 0 0 1 2477.66 1781.66" stroke="#f6f6f6"/><path d="M2481.86 1765.79 A14.2 14.2 0 0 1 2481.86 1786.21" stroke="#555"/><path d="M2486.28 1761.72 A20.2 20.2 0 0 1 2486.28 1790.28" stroke="#555"/></g><rect x="2510.1" y="1767.1" width="25.8" height="17.8" rx="4" fill="none" stroke="#f4f4f4" stroke-width="2.2"/><rect x="2536" y="1772.8" width="5" height="6.4" rx="1.6" fill="#f4f4f4"/><rect x="2513" y="1769.8" width="18" height="12.4" rx="1.5" fill="#f4f4f4"/><path d="M2514.3 1759.7 L2509 1769.8 H2512.6 V1776.5 L2519.2 1765.7 H2515.1 V1759.7Z" fill="#1c1c1c" stroke="#1c1c1c" stroke-width="3" stroke-linejoin="round"/><path d="M2514.3 1759.7 L2509 1769.8 H2512.6 V1776.5 L2519.2 1765.7 H2515.1 V1759.7Z" fill="#f4f4f4"/></svg>
<div class="t" style="left:2641.00px;top:1747.68px;font-size:24px;line-height:24px;color:#ffffff;transform:scaleX(0.9318);">15:57</div>
<div class="t" style="left:2575.00px;top:1779.68px;font-size:24px;line-height:24px;color:#ffffff;transform:scaleX(1.0158);">22/07/2023</div>
</body></html>
